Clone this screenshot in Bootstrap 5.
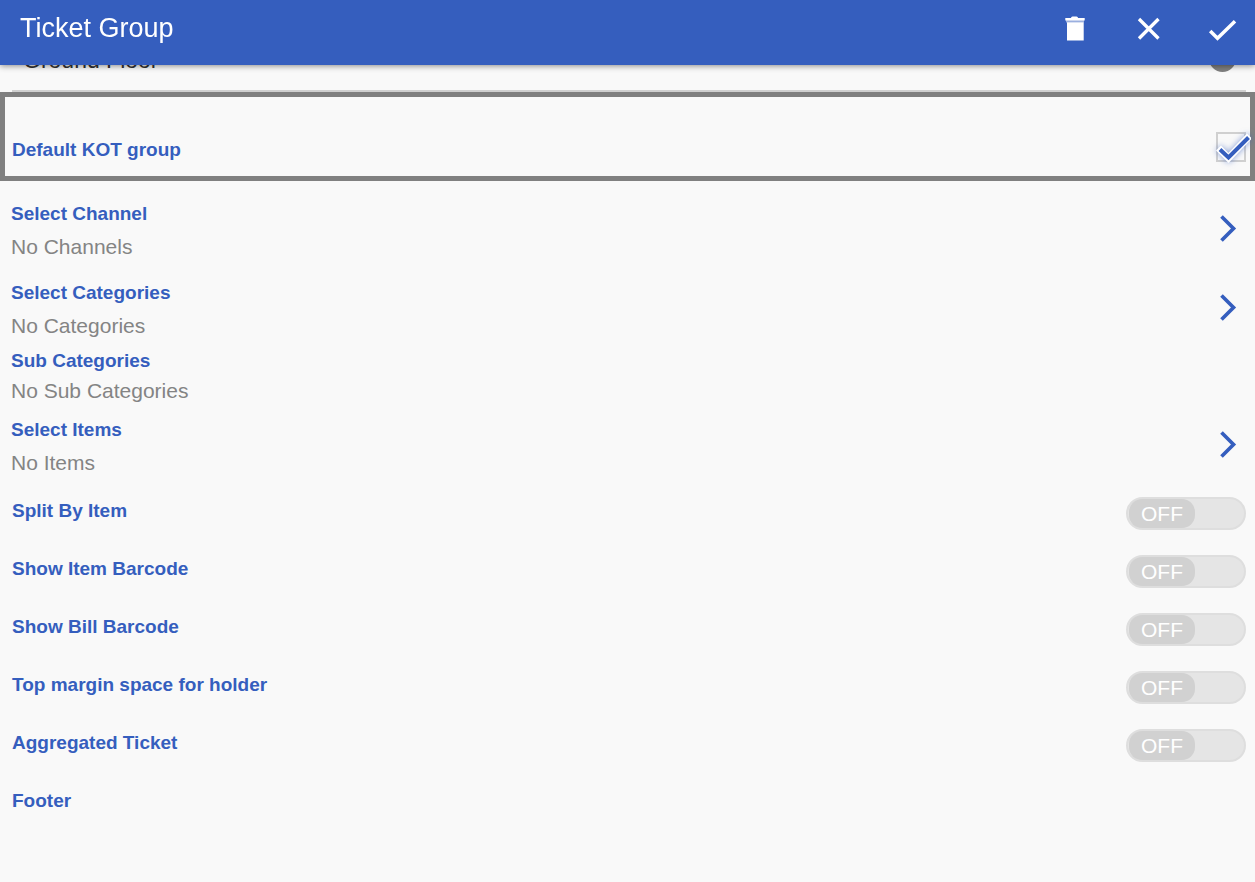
<!DOCTYPE html>
<html lang="en">
<head>
<meta charset="utf-8">
<meta name="viewport" content="width=device-width, initial-scale=1">
<title>Ticket Group</title>
<link rel="stylesheet" href="https://cdn.jsdelivr.net/npm/bootstrap@5.3.0/dist/css/bootstrap.min.css">
<style>
  :root { --brand: #355ebe; --page: #f9f9f9; }
  body { font-family: "Liberation Sans", Arial, sans-serif; background: var(--page); font-size: 20px; line-height: 30px; }
  .app-header { height: 65px; background: var(--brand); box-shadow: 0 1px 6px rgba(0,0,0,.45); padding: 0 14px 10px 20px; }
  .app-header h1 { font-size: 27px; line-height: 34px; }
  .header-actions { gap: 38px; }
  .icon-action { width: 36px; height: 36px; color: #fff; border: 0; background: none; padding: 0; }
  .icon-action svg, .chevron svg { display: block; }
  .floor-row { height: 92px; margin: 0 9px 0 12px; border-bottom: 2px solid #d0d0d0; padding: 45px 10px 0 11px; }
  .floor-row label { font-size: 23px; color: #333; }
  .floor-row input { appearance: none; width: 27px; height: 27px; border-radius: 50%; background: #808080; margin: 0; }
  .default-box { border: 5px solid #808080; height: 89px; padding: 35px 4px 0 7px; }
  .default-box .setting-name { padding-top: 3px; }
  .setting-name { font-size: 19px; line-height: 30px; font-weight: 700; color: var(--brand); }
  .check-wrap { width: 30px; height: 30px; }
  .check-wrap input { appearance: none; width: 30px; height: 30px; margin: 0; border: 2px solid #d0d0d0; display: block; }
  .check-wrap svg { position: absolute; left: -3px; top: -3px; display: none; pointer-events: none; filter: drop-shadow(0 0 3px rgba(53,94,190,.6)); }
  .check-wrap input:checked + svg { display: block; }
  .pickers { padding: 16px 16px 5px 11px; }
  .pickers h2 { font-size: 19px; line-height: 33px; font-weight: 700; color: var(--brand); margin: 0; }
  .pickers p { font-size: 21px; line-height: 33px; color: #848484; margin: 0; }
  .picker-first { margin-bottom: 13px; }
  .picker-sub { margin: 4px 0 7px; }
  .picker-sub h2, .picker-sub p { line-height: 30px; }
  .chevron { width: 24px; height: 30px; padding: 0; border: 0; background: none; color: var(--brand); margin-bottom: 4px; }
  .switch-row { height: 58px; padding: 0 9px 0 12px; }
  .switch-row .setting-name { margin-bottom: 4px; }
  .toggle-box { width: 120px; height: 33px; border: 2px solid #dedede; border-radius: 17px; background: #e5e5e5; padding: 0 1px; cursor: pointer; }
  .toggle-box input { appearance: none; position: absolute; inset: 0; margin: 0; opacity: 0; }
  .toggle-knob { width: 66px; height: 29px; border-radius: 13px; background: #d1d1d1; color: #fff; font-size: 21px; line-height: 30px; }
</style>
</head>
<body>
<header class="app-header fixed-top d-flex align-items-center justify-content-between">
  <h1 class="text-white fw-normal m-0">Ticket Group</h1>
  <div class="header-actions d-flex align-items-center">
    <button type="button" class="icon-action" aria-label="Delete">
      <svg width="36" height="36" viewBox="0 0 36 36" fill="currentColor"><path d="M8.300 8H14q0-1.500 1.500-1.500h4Q21 6.500 21 8h6.700v2.500H8.300zM10 12.200h16.700v18.300H10z"/><path d="M9 10h18v2.500H9z" opacity=".5"/></svg>
    </button>
    <button type="button" class="icon-action" aria-label="Close">
      <svg width="36" height="36" viewBox="0 0 36 36" fill="none" stroke="currentColor" stroke-width="3.300"><path d="M8 9 27.500 28.500M27.500 9 8 28.500"/></svg>
    </button>
    <button type="button" class="icon-action" aria-label="Save">
      <svg width="36" height="36" viewBox="0 0 36 36" fill="none" stroke="currentColor" stroke-width="3.500"><path d="M5.200 21 12.500 28.300 30 11.300"/></svg>
    </button>
  </div>
</header>

<main>
  <div class="floor-row d-flex justify-content-between align-items-start">
    <label for="floor">Ground Floor</label>
    <input type="radio" id="floor" name="floor">
  </div>

  <div class="default-box d-flex justify-content-between align-items-start">
    <label class="setting-name" for="kot">Default KOT group</label>
    <div class="check-wrap position-relative">
      <input type="checkbox" id="kot" checked>
      <svg width="38" height="36" viewBox="0 0 38 36" fill="none"><path d="M5.500 19 15.500 29 36.500 7" stroke="#fff" stroke-width="7"/><path d="M7 20.500 15.500 28.500 35.500 8.500" stroke="#355ebe" stroke-width="4"/></svg>
    </div>
  </div>

  <section class="pickers">
    <div class="picker-first d-flex justify-content-between align-items-center">
      <div><h2>Select Channel</h2><p>No Channels</p></div>
      <button type="button" class="chevron" aria-label="Select Channel"><svg width="24" height="30" viewBox="0 0 24 30" fill="none" stroke="currentColor" stroke-width="3.700"><path d="M6.500 3.500 18.500 15.500 6.500 27.500"/></svg></button>
    </div>
    <div class="d-flex justify-content-between align-items-center">
      <div><h2>Select Categories</h2><p>No Categories</p></div>
      <button type="button" class="chevron" aria-label="Select Categories"><svg width="24" height="30" viewBox="0 0 24 30" fill="none" stroke="currentColor" stroke-width="3.700"><path d="M6.500 3.500 18.500 15.500 6.500 27.500"/></svg></button>
    </div>
    <div class="picker-sub"><h2>Sub Categories</h2><p>No Sub Categories</p></div>
    <div class="d-flex justify-content-between align-items-center">
      <div><h2>Select Items</h2><p>No Items</p></div>
      <button type="button" class="chevron" aria-label="Select Items"><svg width="24" height="30" viewBox="0 0 24 30" fill="none" stroke="currentColor" stroke-width="3.700"><path d="M6.500 3.500 18.500 15.500 6.500 27.500"/></svg></button>
    </div>
  </section>

  <section>
    <div class="switch-row d-flex justify-content-between align-items-center">
      <label class="setting-name" for="split">Split By Item</label>
      <label class="toggle-box position-relative"><input type="checkbox" role="switch" id="split"><span class="toggle-knob d-block text-center">OFF</span></label>
    </div>
    <div class="switch-row d-flex justify-content-between align-items-center">
      <label class="setting-name" for="itembar">Show Item Barcode</label>
      <label class="toggle-box position-relative"><input type="checkbox" role="switch" id="itembar"><span class="toggle-knob d-block text-center">OFF</span></label>
    </div>
    <div class="switch-row d-flex justify-content-between align-items-center">
      <label class="setting-name" for="billbar">Show Bill Barcode</label>
      <label class="toggle-box position-relative"><input type="checkbox" role="switch" id="billbar"><span class="toggle-knob d-block text-center">OFF</span></label>
    </div>
    <div class="switch-row d-flex justify-content-between align-items-center">
      <label class="setting-name" for="topmargin">Top margin space for holder</label>
      <label class="toggle-box position-relative"><input type="checkbox" role="switch" id="topmargin"><span class="toggle-knob d-block text-center">OFF</span></label>
    </div>
    <div class="switch-row d-flex justify-content-between align-items-center">
      <label class="setting-name" for="aggregated">Aggregated Ticket</label>
      <label class="toggle-box position-relative"><input type="checkbox" role="switch" id="aggregated"><span class="toggle-knob d-block text-center">OFF</span></label>
    </div>
    <div class="switch-row d-flex align-items-center"><div class="setting-name">Footer</div></div>
  </section>
</main>
<script src="https://cdn.jsdelivr.net/npm/bootstrap@5.3.0/dist/js/bootstrap.bundle.min.js"></script>
</body>
</html>
